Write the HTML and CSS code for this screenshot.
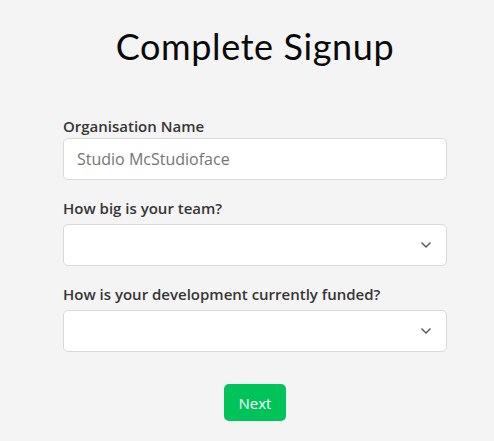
FILE: index.html
```html
<!doctype html>
<html>
<head>
    <meta charset="UTF-8">
    <title>Complete Signup</title>
    <link rel="stylesheet" href="styles.css">
</head>
<body>
<div class="signup">
    <h1>Complete Signup</h1>
    <form>
        <div class="field first">
            <label for="org">Organisation Name</label>
            <input type="text" id="org" placeholder="Studio McStudioface">
        </div>
        <div class="field">
            <label for="team">How big is your team?</label>
            <div class="select">
                <select id="team"><option value=""></option></select>
                <svg viewBox="0 0 12 8" width="12" height="8"><path d="M1.5 1.5 L6 6 L10.5 1.5" fill="none" stroke="#555" stroke-width="1.4"/></svg>
            </div>
        </div>
        <div class="field">
            <label for="funding">How is your development currently funded?</label>
            <div class="select">
                <select id="funding"><option value=""></option></select>
                <svg viewBox="0 0 12 8" width="12" height="8"><path d="M1.5 1.5 L6 6 L10.5 1.5" fill="none" stroke="#555" stroke-width="1.4"/></svg>
            </div>
        </div>
        <div class="actions">
            <button type="button">Next</button>
        </div>
    </form>
</div>
</body>
</html>
```

FILE: styles.css
```css
html {
    background-color: #f4f4f4;
}
body {
    margin: 0;
    padding-left: 16px;
    font-family: "Open Sans", "Noto Sans", sans-serif;
    color: #363636;
}
.signup {
    width: 384px;
    margin: 0 auto;
}
h1 {
    margin: 0;
    padding-top: 24px;
    height: 94px;
    box-sizing: border-box;
    text-align: center;
    font-family: "Lato", sans-serif;
    font-weight: 400;
    font-size: 36px;
    letter-spacing: 0.6px;
    color: #0a0a0a;
}
.field {
    margin-top: 18px;
}
.field.first {
    margin-top: 22px;
}
label {
    display: block;
    font-size: 15px;
    font-weight: 600;
    line-height: 20px;
    margin-bottom: 6px;
}
.field.first label {
    margin-bottom: 2px;
}
input, select {
    display: block;
    width: 100%;
    height: 42px;
    box-sizing: border-box;
    border: 1px solid #d9d9d9;
    border-radius: 5px;
    background-color: #fff;
    font-family: inherit;
    font-size: 16px;
    padding: 0 13px;
    color: #363636;
    appearance: none;
    -webkit-appearance: none;
    outline: none;
}
input::placeholder {
    color: #747474;
}
.select {
    position: relative;
}
.select svg {
    position: absolute;
    right: 15px;
    top: 17px;
    pointer-events: none;
}
.actions {
    display: flex;
    justify-content: center;
    margin-top: 32px;
}
button {
    width: 62px;
    height: 37px;
    border: none;
    border-radius: 5px;
    background-color: #00c35a;
    color: #fff;
    font-family: inherit;
    font-size: 15px;
    font-weight: 500;
}
```
